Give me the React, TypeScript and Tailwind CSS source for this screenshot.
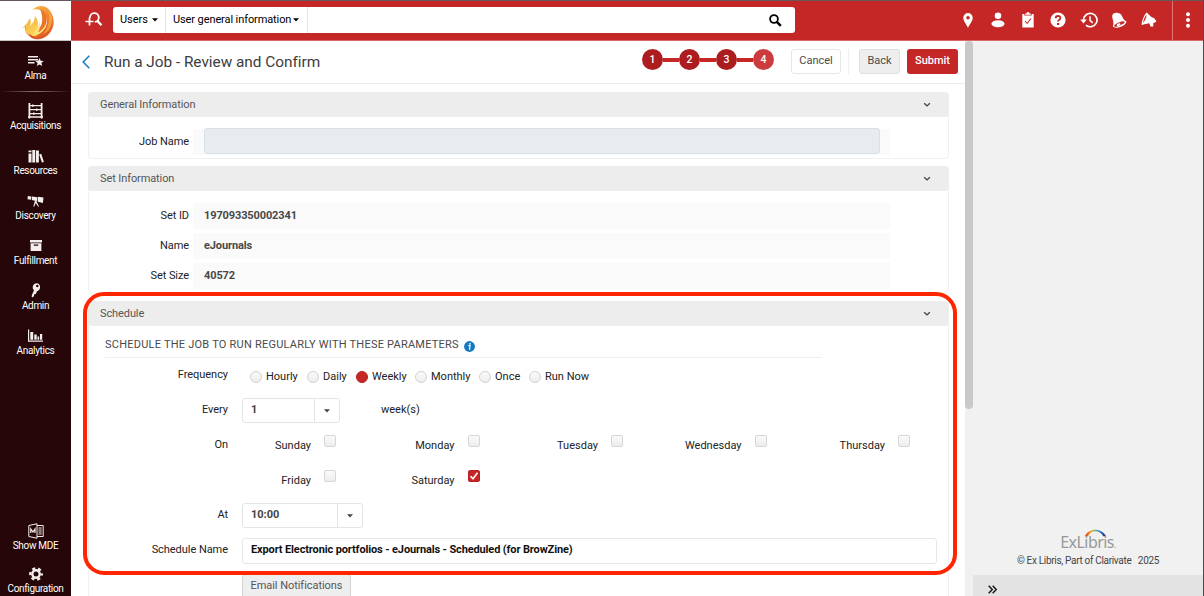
import type { FC, ReactNode } from "react";
import { clsx } from "clsx";

interface IIconProps {
  className?: string;
}

const FlameLogo: FC = () => (
  <svg viewBox="0 0 34 36" className="h-[35px] w-[34px]">
    <defs>
      <linearGradient id="flame-a" x1="0.2" y1="0" x2="0.8" y2="1">
        <stop offset="0" stopColor="#f9c050" />
        <stop offset="0.45" stopColor="#f08a2c" />
        <stop offset="1" stopColor="#dd5220" />
      </linearGradient>
      <linearGradient id="flame-b" x1="0" y1="0" x2="0.6" y2="1">
        <stop offset="0" stopColor="#f5a030" />
        <stop offset="1" stopColor="#fbd95c" />
      </linearGradient>
    </defs>
    <path
      d="M11 5C17-1 26 0 30 7c5 8 4 18-3 24-6 5-16 5-21-1-3-4-3-7-2-10 2 6 5 9 10 9 9 0 13-7 12-14C25 7 19 3 11 5z"
      fill="url(#flame-a)"
    />
    <path d="M.5 24c4-3 6-6 8-10 2 3 1 6 0 8 3-3 6-7 5-11 4 4 5 10 2 15-2 3-2 5 1 6-5 1-10-1-12-5-1-2 0-4 1-6-2 1-3 2-5 3z" fill="url(#flame-b)" />
    <path d="M19 4c7 3 9 11 5 18-3 5-7 8-11 8 2-3 7-6 8-12C22 13 21 8 19 4z" fill="#ec7426" />
    <path d="M17 13c3 5 1 10-2 13-2 2-3 4-1 5 5 0 10-5 11-11-2 4-5 7-8 8 3-5 3-10 0-15z" fill="#fbe27a" />
    <path d="M27 4c4 4 6 9 4 15-1 5-4 9-9 11 6-6 8-16 5-26z" fill="#f6b24a" opacity="0.7" />
    <path d="M8 29c4 5 12 6 18 2-4 4-9 5-13 4-3-1-5-3-5-6z" fill="#d9441d" opacity="0.7" />
  </svg>
);

const AlmaIcon: FC = () => (
  <svg viewBox="0 0 16 12" className="h-3 w-4" fill="currentColor">
    <path d="M0 1h10v1.6H0zM0 4h10v1.6H0zM0 7h6.5v1.6H0z" />
    <path d="M11.5 3l1.2 2.8 3 .2-2.3 2 .8 3-2.7-1.6L8.8 11l.8-3-2.3-2 3-.2z" />
  </svg>
);

const AcquisitionsIcon: FC = () => (
  <svg viewBox="0 0 15 16" className="h-4 w-[15px]" fill="currentColor">
    <path d="M.5 0h1.800v15.500H.5zM12.700 0h1.800v15.500h-1.800zM2 2h11v1.300H2zM2 6h11v1.300H2zM2 10h11v1.300H2zM0 13.300h15v1.400H0z" />
    <path d="M4 1.500h1.500v2.300H4zM8 5.500h1.500v2.300H8zM5 9.500h1.500v2.300H5z" />
  </svg>
);

const ResourcesIcon: FC = () => (
  <svg viewBox="0 0 16 14" className="h-3.5 w-4" fill="currentColor">
    <path d="M.5 4.500h3v9H.5zM4.300 1h2.900v12.500H4.300zM8 1.500h2.900v12H8z" />
    <path d="M11.200 5.500l2-.8 2.700 8.300-2 .6z" />
    <path d="M.5 1.500h3v1.800h-3z" />
  </svg>
);

const DiscoveryIcon: FC = () => (
  <svg viewBox="0 0 17 12" className="h-3 w-[17px]" fill="currentColor">
    <path d="M.8 1l3.600.5-.4 3.200L.5 4.200zM5 1.600l5.500.6-.3 4L4.800 5zM11 1.700l5.500.8-.6 5.500-5-1.200z" />
    <path d="M8 5.500l1.200.2.8 1.500 2 4.300h-1L8.800 8l-1.500 3.500h-1z" />
  </svg>
);

const FulfillmentIcon: FC = () => (
  <svg viewBox="0 0 12 11" className="h-[11px] w-3" fill="currentColor">
    <path d="M0 0h12v2.500H0z" />
    <path fillRule="evenodd" d="M.6 3.200h10.800V11H.6zM3.800 4.500v1.200h4.400V4.500z" />
  </svg>
);

const AdminIcon: FC = () => (
  <svg viewBox="0 0 10 15" className="h-[15px] w-2.5" fill="currentColor">
    <path
      fillRule="evenodd"
      d="M5.500.3c2.400 0 3.800 1.900 3.600 4C9 6.500 7.600 8 6 8.200L4.800 11l-1.500.2-.3 1.500-1 1.600-1.300-.3.200-2L3 7.300C1.700 6.200 1.400 4.500 2 2.800 2.600 1.300 4 .3 5.500.3zM6.300 1.800a1.200 1.200 0 100 2.400 1.200 1.200 0 000-2.400z"
    />
  </svg>
);

const AnalyticsIcon: FC = () => (
  <svg viewBox="0 0 15 13" className="h-[13px] w-[15px]" fill="currentColor">
    <path d="M0 .5h1.200v11H15v1.200H0zM2.300 3h2.900v7.800H2.300zM6.300 5.500h2.400v5.300H6.300zM9.500 7.500h1.700v3.300H9.500zM12 5h2.200v5.800H12z" />
  </svg>
);

const MdeIcon: FC = () => (
  <svg viewBox="0 0 16 16" className="h-4 w-4" fill="none" stroke="currentColor">
    <path d="M.8 2.500L9 .8v14.400L.8 13.500zM9 2.500h6.200v11H9" />
    <path d="M2.800 10V6l2.100 3L7 6v4" strokeWidth="1.200" />
    <path d="M10.500 5h3.200M10.500 7h3.200M10.500 9h3.200M10.500 11h3.200" strokeWidth="1" />
  </svg>
);

const GearIcon: FC = () => (
  <svg viewBox="0 0 14 14" className="h-3.5 w-3.5" fill="none" stroke="currentColor">
    <circle cx="7" cy="7" r="3.700" strokeWidth="2.400" />
    <circle cx="7" cy="7" r="5.700" strokeWidth="2.400" strokeDasharray="3 2.970" strokeDashoffset="1.500" />
  </svg>
);

interface ISideItemProps {
  label: string;
  icon: ReactNode;
}

const SideItem: FC<Readonly<ISideItemProps>> = ({ label, icon }) => (
  <a className="flex h-[45px] shrink-0 flex-col items-center text-white">
    <span className="flex h-[17px] items-center text-[#f4eeee]">{icon}</span>
    <span className="text-[10px] leading-[14px] tracking-[-0.330px] whitespace-nowrap">{label}</span>
  </a>
);

const Sidebar: FC = () => (
  <aside className="flex w-[71px] shrink-0 flex-col bg-[#260608]">
    <div className="flex h-[41px] shrink-0 items-center justify-center border-b border-[#c9c4c4] bg-white pt-1 pl-1">
      <FlameLogo />
    </div>
    <div className="mt-[11px] flex h-[39px] flex-col">
      <SideItem label="Alma" icon={<AlmaIcon />} />
    </div>
    <div className="h-px shrink-0 bg-gradient-to-r from-transparent via-[#8a7475] to-transparent" />
    <nav className="mt-2.5 flex flex-col">
      <SideItem label="Acquisitions" icon={<AcquisitionsIcon />} />
      <SideItem label="Resources" icon={<ResourcesIcon />} />
      <SideItem label="Discovery" icon={<DiscoveryIcon />} />
      <SideItem label="Fulfillment" icon={<FulfillmentIcon />} />
      <SideItem label="Admin" icon={<AdminIcon />} />
      <SideItem label="Analytics" icon={<AnalyticsIcon />} />
    </nav>
    <div className="mt-auto flex flex-col">
      <div className="h-[43px]">
        <SideItem label="Show MDE" icon={<MdeIcon />} />
      </div>
      <div className="h-[31px]">
        <SideItem label="Configuration" icon={<GearIcon />} />
      </div>
    </div>
  </aside>
);

const Caret: FC<IIconProps> = ({ className }) => (
  <svg viewBox="0 0 6 4" className={clsx("h-1 w-1.5", className)} fill="currentColor">
    <path d="M0 .3h6L3 3.600z" />
  </svg>
);

const TopIcons: FC = () => (
  <div className="ml-auto flex items-center text-white">
    <div className="flex w-[30px] justify-center">
      <svg viewBox="0 0 10 15" className="h-[15px] w-2.5" fill="currentColor">
        <path fillRule="evenodd" d="M5 0a4.700 4.700 0 014.700 4.700C9.700 8 6.500 11 5 15 3.500 11 .3 8 .3 4.700A4.700 4.700 0 015 0zm0 3a1.800 1.800 0 100 3.600A1.800 1.800 0 005 3z" />
      </svg>
    </div>
    <div className="flex w-[30px] justify-center">
      <svg viewBox="0 0 14 16" className="h-4 w-3.5" fill="currentColor">
        <circle cx="7" cy="3.800" r="3.300" />
        <ellipse cx="7" cy="11.700" rx="6.600" ry="3.500" />
      </svg>
    </div>
    <div className="flex w-[30px] justify-center">
      <svg viewBox="0 0 12 16" className="h-4 w-3" fill="currentColor">
        <path d="M.3 2h2v1.500h7.400V2h2v13.500H.3z" />
        <path d="M3.200 1.500h1.300a1.500 1.500 0 013 0h1.300v1.300H3.200z" />
        <path d="M3 9l2.200 2.500L9 6.500" fill="none" stroke="#c52626" strokeWidth="1.100" />
      </svg>
    </div>
    <div className="flex w-[30px] justify-center">
      <svg viewBox="0 0 16 16" className="h-4 w-4">
        <circle cx="8" cy="8" r="7.600" fill="currentColor" />
        <path d="M5.700 6.300c0-3 4.700-3 4.700-.3 0 1.800-2.300 1.700-2.300 3.600" fill="none" stroke="#c52626" strokeWidth="1.800" />
        <circle cx="8.100" cy="11.900" r="1.200" fill="#c52626" />
      </svg>
    </div>
    <div className="flex w-[31px] justify-center">
      <svg viewBox="0 0 18 16" className="h-4 w-[18px]" fill="none" stroke="currentColor">
        <path d="M3.600 8A6.700 6.700 0 1 1 5.900 13.100" strokeWidth="1.700" />
        <path d="M.2 7.500h6.600L3.500 11.500z" fill="currentColor" stroke="none" />
        <path d="M10 4.200v4.100l2.800 2.600" strokeWidth="1.500" />
      </svg>
    </div>
    <div className="flex w-[30px] justify-center">
      <svg viewBox="0 0 16 16" className="h-4 w-4">
        <path
          d="M2.200 1.800C5 -.2 9.500 .8 11 4c.8 2.300 1.700 4 4.300 5.200.5 1.800-2 4.300-5.300 5.600-3.500 1.300-7.500 1.200-8.200-.5C3 11.500 2.300 9 1.500 6.500 1 4.500 1 3 2.200 1.800z"
          fill="currentColor"
        />
        <ellipse cx="8.400" cy="12" rx="5.600" ry="1.600" transform="rotate(-23 8.400 12)" fill="#c52626" />
        <ellipse cx="7.600" cy="12.700" rx="2" ry="1.200" transform="rotate(-23 7.600 12.700)" fill="currentColor" />
      </svg>
    </div>
    <div className="flex w-[30px] justify-center">
      <svg viewBox="0 0 16 16" className="h-4 w-4">
        <path d="M5.800 1.300C4 3 1.500 8.500 1.200 12.300c2-2 4.800-7.500 4.600-11z" fill="none" stroke="currentColor" strokeWidth="1.300" strokeLinejoin="round" />
        <path d="M5.800.8L11 5.500l1.800.3 2.700 3.500-1.500 1.200-1.700.4 0 3.600H9.500L8.300 11.200 1 12.800c3-2.500 5.500-7.800 4.800-12z" fill="currentColor" />
        <path d="M5.600 2.500C5.400 5.500 4 8.500 2 11c.4-3 2-6.500 3.600-8.500z" fill="#c52626" />
      </svg>
    </div>
    <div className="ml-2 flex h-10 w-[31px] items-center justify-center border-l border-[#df7777]">
      <svg viewBox="0 0 4 16" className="h-4 w-1" fill="currentColor">
        <circle cx="2" cy="2.300" r="2" />
        <circle cx="2" cy="8" r="2" />
        <circle cx="2" cy="13.700" r="2" />
      </svg>
    </div>
  </div>
);

const TopBar: FC = () => (
  <header className="flex h-[41px] shrink-0 items-center border-b border-[#d86a6a] bg-[#c52626]">
    <svg viewBox="0 0 18 16" className="ml-3.5 h-4 w-[18px] text-white" fill="none" stroke="currentColor">
      <path d="M5 5.800A4.400 4.400 0 1 1 9.800 9.900" strokeWidth="1.800" />
      <path d="M12.300 8.800l4.200 4.500" strokeWidth="2.400" />
      <path d="M.5 9.500h8M4.500 5.500v8" strokeWidth="1.700" />
    </svg>
    <div className="ml-[10px] flex h-[26px] w-[682px] items-stretch rounded-[3px] bg-white text-[11px] text-black">
      <div className="flex w-[53px] items-center gap-1 border-r border-[#dbe6ee] pl-[7px] tracking-[-0.050px]">
        Users
        <Caret />
      </div>
      <div className="flex w-[142px] items-center gap-0.5 border-r border-[#dbe6ee] pl-[7px] tracking-[-0.100px] whitespace-nowrap">
        User general information
        <Caret />
      </div>
      <svg viewBox="0 0 13 13" className="mt-[7px] mr-[13px] ml-auto h-[13px] w-[13px]" fill="none" stroke="currentColor">
        <circle cx="5" cy="5" r="3.900" strokeWidth="1.800" />
        <path d="M7.800 7.800l4 4" strokeWidth="2.500" />
      </svg>
    </div>
    <TopIcons />
  </header>
);

const STEPS = [1, 2, 3, 4];

const TitleBar: FC = () => (
  <div className="flex h-[43px] shrink-0 items-start border-b border-[#ececec] pt-2 pr-[7px]">
    <svg viewBox="0 0 8 14" className="mt-1.5 ml-[11px] h-3.5 w-2" fill="none" stroke="#1a80c8" strokeWidth="1.600">
      <path d="M7.300.7L1.200 7l6.100 6.300" />
    </svg>
    <h1 className="mt-0.5 ml-3.5 text-[15.4px] leading-[23px] tracking-[-0.030px] whitespace-nowrap text-[#3c3c3c]">
      Run a Job - Review and Confirm
    </h1>
    <div className="ml-auto flex items-center">
      {STEPS.map((step) => (
        <div key={step} className="flex items-center">
          {step > 1 && <span className="h-1 w-4 bg-[#c52626]" />}
          <span
            className={clsx(
              "flex h-[21px] w-[21px] items-center justify-center rounded-full text-[10.5px] font-medium text-white",
              step === 4 ? "bg-[#cd3c3c]" : "bg-[#ab1d1f]"
            )}
          >
            {step}
          </span>
        </div>
      ))}
    </div>
    <div className="ml-[17px] flex h-[25px] text-[11px] text-[#4a4a4a]">
      <button className="w-[50px] rounded-[3px] border border-[#e6e6e6] bg-white">Cancel</button>
      <span className="ml-[7px] w-px bg-[#f0f0f0]" />
      <button className="ml-2.5 w-[41px] rounded-[3px] border border-[#dedede] bg-[#eeeeee]">Back</button>
      <button className="ml-[7px] w-[51px] rounded-[3px] bg-[#c52626] font-medium text-white">Submit</button>
    </div>
  </div>
);

interface ISectionProps {
  title: string;
  className?: string;
  children: ReactNode;
}

const Section: FC<Readonly<ISectionProps>> = ({ title, className, children }) => (
  <section className={clsx("shrink-0 rounded-[4px] border border-[#f0f0f0]", className)}>
    <div className="-mx-px -mt-px flex h-[25px] items-center rounded-[4px] bg-[#ededed] pr-[18px] pl-3 text-[11px] text-[#555]">
      <span className="pt-0.5 tracking-[-0.100px]">{title}</span>
      <svg viewBox="0 0 8 6" className="ml-auto h-1.5 w-2" fill="none" stroke="#444" strokeWidth="1.400">
        <path d="M1.200 1.200L4 3.900l2.800-2.700" />
      </svg>
    </div>
    {children}
  </section>
);

const SET_ROWS = [
  { label: "Set ID", value: "197093350002341" },
  { label: "Name", value: "eJournals" },
  { label: "Set Size", value: "40572" },
];

const FREQUENCIES = [
  { label: "Hourly", width: "w-[57px]" },
  { label: "Daily", width: "w-[49px]" },
  { label: "Weekly", width: "w-[59px]" },
  { label: "Monthly", width: "w-[64px]" },
  { label: "Once", width: "w-[50px]" },
  { label: "Run Now", width: "w-[60px]" },
];

const DAY_ROWS = [
  ["Sunday", "Monday", "Tuesday", "Wednesday", "Thursday"],
  ["Friday", "Saturday"],
];

interface IFormRowProps {
  label?: string;
  children: ReactNode;
}

const FormRow: FC<Readonly<IFormRowProps>> = ({ label, children }) => (
  <div className="flex h-[35px] items-center">
    <span className="mr-[14px] w-[139px] shrink-0 text-right tracking-[-0.050px] text-[#222]">{label}</span>
    {children}
  </div>
);

interface ISelectBoxProps {
  value: string;
  className: string;
}

const SelectBox: FC<Readonly<ISelectBoxProps>> = ({ value, className }) => (
  <div className={clsx("flex h-[25px] rounded-[3px] border border-[#e4e4e4] bg-white", className)}>
    <span className="flex flex-1 items-center pl-2 font-bold text-[#444]">{value}</span>
    <span className="flex w-[25px] items-center justify-center border-l border-[#e4e4e4] text-[#444]">
      <Caret />
    </span>
  </div>
);

interface IDayProps {
  label: string;
  checked: boolean;
}

const Day: FC<Readonly<IDayProps>> = ({ label, checked }) => (
  <div className="flex w-[143.500px] shrink-0 items-center">
    <span className="w-[69px] pt-0.5 text-right text-[#222]">{label}</span>
    <span
      className={clsx(
        "mb-2.5 ml-[13px] flex h-3 w-3 items-center justify-center rounded-[2px] border",
        checked ? "border-[#b81f22] bg-[#c52626]" : "border-[#d6d6d6] bg-gradient-to-b from-[#fafafa] to-[#ededed]"
      )}
    >
      {checked && (
        <svg viewBox="0 0 10 10" className="h-2.5 w-2.5" fill="none" stroke="#fff" strokeWidth="1.600">
          <path d="M1.500 5.200l2.500 2.600 4.500-6" />
        </svg>
      )}
    </span>
  </div>
);

const ScheduleForm: FC = () => (
  <div className="h-[272px] text-[11px]">
    <div className="ml-4 flex h-8 w-[717px] items-center border-b border-[#efefef] pt-2 tracking-[0.230px] text-[#4a4a4a]">
      SCHEDULE THE JOB TO RUN REGULARLY WITH THESE PARAMETERS
      <svg viewBox="0 0 11 11" className="mt-0.5 ml-[5px] h-[11px] w-[11px]">
        <circle cx="5.500" cy="5.500" r="5.400" fill="#1279c2" />
        <path d="M4.300 4.600h1.800L5.500 8.300h.9" fill="none" stroke="#fff" strokeWidth="1.100" />
        <circle cx="6" cy="2.800" r=".9" fill="#fff" />
      </svg>
    </div>
    <FormRow label="Frequency">
      <div className="mt-1 ml-2 flex">
        {FREQUENCIES.map(({ label, width }) => (
          <label key={label} className={clsx("flex shrink-0 items-center gap-1 whitespace-nowrap text-[#222]", width)}>
            <span
              className={clsx(
                "mb-0.5 h-3 w-3 shrink-0 rounded-full border",
                label === "Weekly"
                  ? "border-[#b81f22] bg-[#c52626]"
                  : "border-[#d2d2d2] bg-gradient-to-b from-[#fafafa] to-[#ededed]"
              )}
            />
            {label}
          </label>
        ))}
      </div>
    </FormRow>
    <FormRow label="Every">
      <SelectBox value="1" className="w-[98px]" />
      <span className="ml-[41px] text-[#222]">week(s)</span>
    </FormRow>
    {DAY_ROWS.map((days, index) => (
      <FormRow key={days[0]} label={index === 0 ? "On" : undefined}>
        {days.map((day) => (
          <Day key={day} label={day} checked={day === "Saturday"} />
        ))}
      </FormRow>
    ))}
    <FormRow label="At">
      <SelectBox value="10:00" className="w-[121px]" />
    </FormRow>
    <FormRow label="Schedule Name">
      <div className="flex h-[26px] w-[695px] items-center rounded-[3px] border border-[#e8e8e8] pl-2 font-bold tracking-[-0.130px] text-[#111]">
        Export Electronic portfolios - eJournals - Scheduled (for BrowZine)
      </div>
    </FormRow>
    <div className="mt-1.5 ml-[153px] flex h-[25px] w-[109px] items-center justify-center rounded-[3px] border border-[#d4d4d4] bg-[#eeeeee] tracking-[-0.050px] text-[#555]">
      Email Notifications
    </div>
  </div>
);

const Content: FC = () => (
  <main className="flex w-[894px] shrink-0 flex-col overflow-hidden bg-white">
    <TitleBar />
    <div className="flex min-h-0 flex-1 flex-col pt-2 pr-4 pl-[17px]">
      <Section title="General Information" className="h-[67px]">
        <div className="mt-3 flex h-[26px] items-center text-[11px]">
          <span className="w-[100px] text-right tracking-[-0.080px] text-[#222]">Job Name</span>
          <div className="ml-1 h-full w-[697px] bg-[#fafafa] pr-[10px] pl-[11px]">
            <div className="-mt-px h-full rounded-[3px] border border-[#dbe0e5] bg-[#e8ecf0]" />
          </div>
        </div>
      </Section>
      <Section title="Set Information" className="mt-[7px] h-[127px]">
        <div className="mt-3 flex flex-col gap-1 text-[11px]">
          {SET_ROWS.map(({ label, value }) => (
            <div key={label} className="flex h-[26px] items-center">
              <span className="w-[100px] text-right tracking-[-0.080px] text-[#222]">{label}</span>
              <div className="ml-1 flex h-full w-[697px] items-center bg-[#fafafa] pl-[11px] font-bold tracking-[-0.120px] text-[#484848]">
                {value}
              </div>
            </div>
          ))}
        </div>
      </Section>
      <Section title="Schedule" className="mt-2 h-[320px]">
        <ScheduleForm />
      </Section>
    </div>
  </main>
);

const SidePane: FC = () => (
  <aside className="flex flex-1 flex-col bg-[#f1f1f1]">
    <div className="mt-auto flex flex-col items-center pb-[7px]">
      <div className="relative h-[24px] text-[16px] leading-[26px] tracking-[-0.550px] text-[#999]" style={{ fontFamily: '"Noto Sans", sans-serif' }}>
        ExLibris<span className="text-[9px]">.</span>
        <svg viewBox="0 0 22 8" className="absolute top-0 left-[25px] h-2 w-[22px]" fill="none">
          <defs>
            <linearGradient id="rainbow">
              <stop offset="0" stopColor="#e6321f" />
              <stop offset="0.300" stopColor="#f5b324" />
              <stop offset="0.500" stopColor="#5cb596" />
              <stop offset="0.720" stopColor="#2277c7" />
              <stop offset="1" stopColor="#38206e" />
            </linearGradient>
          </defs>
          <path d="M0 7.200C3-1.500 17-1.500 21 7.200h-2.800C15 .500 6 .500 3 7.200z" fill="url(#rainbow)" />
        </svg>
      </div>
      <p className="text-[10px] leading-[15px] tracking-[-0.320px] whitespace-pre text-[#444]">© Ex Libris, Part of Clarivate   2025</p>
    </div>
    <div className="flex h-[21px] items-end bg-[#e3e3e3] pb-0.5 pl-[15px]">
      <svg viewBox="0 0 9 9" className="h-[9px] w-[9px]" fill="none" stroke="#111" strokeWidth="1.400">
        <path d="M.7.700L4.300 4.500.7 8.300M4.700.700l3.600 3.800-3.600 3.800" />
      </svg>
    </div>
  </aside>
);

export default function App() {
  return (
    <div
      className="relative flex h-[596px] w-[1204px] overflow-hidden border-r border-[#4b4b4b] bg-white"
      style={{ fontFamily: 'Roboto, "Liberation Sans", sans-serif' }}
    >
      <Sidebar />
      <div className="flex min-w-0 flex-1 flex-col">
        <TopBar />
        <div className="flex min-h-0 flex-1">
          <Content />
          <div className="w-2 shrink-0 bg-[#f0f0f0]">
            <div className="h-[368px] rounded-full bg-[#c9c9c9]" />
          </div>
          <SidePane />
        </div>
      </div>
      <div className="absolute top-0 left-0 h-px w-full bg-[#66585a]" />
      <div className="absolute top-[292px] left-[83px] h-[283px] w-[874px] rounded-[21px] border-4 border-[#ff2600]" />
    </div>
  );
}
